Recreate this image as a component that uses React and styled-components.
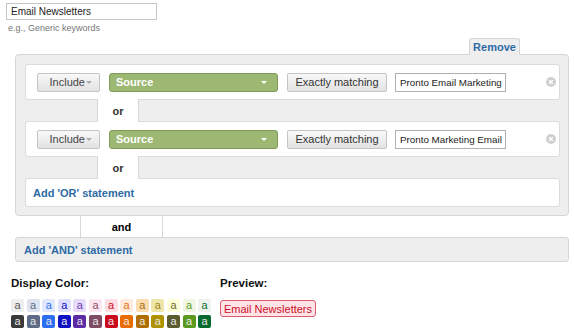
import React from "react";
import styled, { createGlobalStyle } from "styled-components";

const GlobalStyle = createGlobalStyle`
  body {
    margin: 0;
    background: #ffffff;
    font-family: "Liberation Sans", Arial, sans-serif;
    color: #222;
  }
`;

const SWATCHES = [
  { light: "#eeeeee", dark: "#3a3a3a", ink: "#555555" },
  { light: "#dde3ee", dark: "#5f6b86", ink: "#5f6b86" },
  { light: "#dfe8ff", dark: "#2c6ff2", ink: "#2c6ff2" },
  { light: "#dedeff", dark: "#1010c4", ink: "#1010c4" },
  { light: "#e6dcfa", dark: "#5c2ba6", ink: "#6a3ab4" },
  { light: "#fde6f0", dark: "#7f4c66", ink: "#8a4c6c" },
  { light: "#ffdde2", dark: "#cc0a1e", ink: "#cc1028" },
  { light: "#ffeadc", dark: "#ea6c00", ink: "#e87010" },
  { light: "#fbdcae", dark: "#b06e00", ink: "#a86a10" },
  { light: "#efe5a8", dark: "#ad9300", ink: "#9a8610" },
  { light: "#ffffd8", dark: "#5b5b30", ink: "#6a6a30" },
  { light: "#eff7e2", dark: "#5c9a1f", ink: "#5c9a1f" },
  { light: "#edf3ec", dark: "#066a2e", ink: "#0a6a30" },
];

const CONDITIONS = ["Pronto Email Marketing", "Pronto Marketing Email"];

export default function App() {
  return (
    <>
      <GlobalStyle />
      <Page>
        <NameField>
          <NameInput defaultValue="Email Newsletters" />
          <Hint>e.g., Generic keywords</Hint>
        </NameField>

        <TabRow>
          <RemoveTab>Remove</RemoveTab>
        </TabRow>

        <Panel>
          {CONDITIONS.map((value) => (
            <React.Fragment key={value}>
              <Row>
                <IncludeButton>
                  Include<Caret />
                </IncludeButton>
                <SourceSelect>
                  Source<Caret $light />
                </SourceSelect>
                <MatchButton>Exactly matching</MatchButton>
                <ValueInput defaultValue={value} />
                <ClearIcon>
                  <svg width="10" height="10" viewBox="0 0 10 10">
                    <circle cx="5" cy="5" r="5" fill="#cfcfcf" />
                    <path d="M3.2 3.2 L6.8 6.8 M6.8 3.2 L3.2 6.8" stroke="#fff" strokeWidth="1.3" />
                  </svg>
                </ClearIcon>
              </Row>
              <Connector $left={72} $width={42}>or</Connector>
            </React.Fragment>
          ))}
          <AddBox>Add 'OR' statement</AddBox>
        </Panel>

        <AndConnector>and</AndConnector>
        <AndBox>Add 'AND' statement</AndBox>

        <Bottom>
          <ColorSection>
            <Label>Display Color:</Label>
            <SwatchGrid>
              {SWATCHES.map((s, i) => (
                <Swatch key={"l" + i} $bg={s.light} $ink={s.ink}>a</Swatch>
              ))}
              {SWATCHES.map((s, i) => (
                <Swatch key={"d" + i} $bg={s.dark} $ink="#e8e8e8">a</Swatch>
              ))}
            </SwatchGrid>
          </ColorSection>
          <PreviewSection>
            <Label>Preview:</Label>
            <Badge>Email Newsletters</Badge>
          </PreviewSection>
        </Bottom>
      </Page>
    </>
  );
}

const Page = styled.div`
  width: 574px;
  height: 333px;
  display: flex;
  flex-direction: column;
  overflow: hidden;
`;

const NameField = styled.div`
  display: flex;
  flex-direction: column;
  align-items: flex-start;
  padding: 3px 0 0 6px;
`;

const NameInput = styled.input`
  box-sizing: border-box;
  width: 151px;
  height: 17px;
  border: 1px solid #c6c6c6;
  padding: 0 4px;
  font-family: inherit;
  font-size: 10px;
  color: #222;
  outline: none;
`;

const Hint = styled.div`
  margin: 3px 0 0 2px;
  font-size: 9px;
  line-height: 11px;
  color: #777;
`;

const TabRow = styled.div`
  display: flex;
  justify-content: flex-end;
  padding-right: 54px;
  margin-top: 4px;
  margin-bottom: -1px;
  position: relative;
  z-index: 1;
`;

const RemoveTab = styled.div`
  box-sizing: border-box;
  width: 51px;
  height: 17px;
  background: #eeeeee;
  border: 1px solid #d6d6d6;
  border-bottom: none;
  border-radius: 3px 3px 0 0;
  display: flex;
  align-items: center;
  justify-content: center;
  font-size: 11px;
  font-weight: bold;
  color: #2d6aa5;
`;

const Panel = styled.div`
  box-sizing: border-box;
  margin-left: 15px;
  width: 554px;
  background: #eeeeee;
  border: 1px solid #d6d6d6;
  border-radius: 4px;
  padding: 9px 8px 8px 9px;
  display: flex;
  flex-direction: column;
`;

const Row = styled.div`
  box-sizing: border-box;
  height: 36px;
  background: #fff;
  border: 1px solid #dcdcdc;
  border-radius: 3px;
  display: flex;
  align-items: center;
  gap: 9px;
  padding: 0 3px 0 11px;
`;

const GrayButton = styled.div`
  box-sizing: border-box;
  height: 19px;
  border: 1px solid #c4c4c4;
  border-radius: 2px;
  background: linear-gradient(#f9f9f9, #e2e2e2);
  display: flex;
  align-items: center;
  font-size: 11px;
  color: #444;
`;

const IncludeButton = styled(GrayButton)`
  width: 63px;
  justify-content: flex-end;
  padding-right: 7px;
`;

const MatchButton = styled(GrayButton)`
  width: 100px;
  justify-content: center;
  color: #333;
`;

const Caret = styled.span`
  width: 0;
  height: 0;
  margin-left: ${(p) => (p.$light ? "auto" : "1px")};
  border-left: 3px solid transparent;
  border-right: 3px solid transparent;
  border-top: 3px solid ${(p) => (p.$light ? "#fff" : "#aaa")};
`;

const SourceSelect = styled.div`
  box-sizing: border-box;
  width: 169px;
  height: 19px;
  background: #9db872;
  border: 1px solid #7f9c58;
  border-radius: 3px;
  display: flex;
  align-items: center;
  padding: 0 10px 0 6px;
  font-size: 11px;
  font-weight: bold;
  color: #fff;
`;

const ValueInput = styled.input`
  box-sizing: border-box;
  width: 111px;
  height: 19px;
  margin-left: -1px;
  border: 1px solid #b0b0b0;
  padding: 0 1px 0 4px;
  font-family: inherit;
  font-size: 9.8px;
  color: #222;
  outline: none;
`;

const ClearIcon = styled.span`
  margin-left: auto;
  width: 10px;
  height: 10px;
  display: flex;
`;

const Connector = styled.div`
  box-sizing: border-box;
  position: relative;
  z-index: 1;
  margin: -1px 0 -1px ${(p) => p.$left}px;
  width: ${(p) => p.$width}px;
  height: 23px;
  background: #fff;
  border-left: 1px solid #d8d8d8;
  border-right: 1px solid #d8d8d8;
  display: flex;
  align-items: center;
  justify-content: center;
  font-size: 11px;
  font-weight: bold;
  color: #333;
`;

const AndConnector = styled.div`
  box-sizing: border-box;
  margin-left: 80px;
  width: 83px;
  height: 21px;
  border-left: 1px solid #d8d8d8;
  border-right: 1px solid #d8d8d8;
  display: flex;
  align-items: center;
  justify-content: center;
  font-size: 11px;
  font-weight: bold;
  color: #000;
`;

const AddBox = styled.div`
  box-sizing: border-box;
  height: 29px;
  background: #fff;
  border: 1px solid #dcdcdc;
  border-radius: 3px;
  display: flex;
  align-items: center;
  padding-left: 7px;
  font-size: 11px;
  font-weight: bold;
  color: #2d6aa5;
`;

const AndBox = styled(AddBox)`
  margin-left: 15px;
  width: 554px;
  height: 25px;
  background: #eeeeee;
  border-color: #d6d6d6;
  padding-left: 8px;
`;

const Bottom = styled.div`
  display: flex;
  gap: 11px;
  margin: 15px 0 0 11px;
`;

const ColorSection = styled.div`
  width: 198px;
`;

const PreviewSection = styled.div`
  display: flex;
  flex-direction: column;
  align-items: flex-start;
`;

const Label = styled.div`
  font-size: 11.5px;
  line-height: 13px;
  font-weight: bold;
  color: #111;
`;

const SwatchGrid = styled.div`
  margin-top: 9px;
  display: grid;
  grid-template-columns: repeat(13, 13px);
  grid-auto-rows: 13px;
  column-gap: 2.6px;
  row-gap: 3px;
`;

const Swatch = styled.div`
  background: ${(p) => p.$bg};
  color: ${(p) => p.$ink};
  border-radius: 2px;
  display: flex;
  align-items: center;
  justify-content: center;
  font-size: 11px;
  line-height: 13px;
`;

const Badge = styled.div`
  box-sizing: border-box;
  margin-top: 10px;
  height: 17px;
  padding: 0 3px;
  background: #ffe3e7;
  border: 1px solid #df5c6c;
  border-radius: 3px;
  display: flex;
  align-items: center;
  font-size: 11px;
  color: #cc1028;
`;
